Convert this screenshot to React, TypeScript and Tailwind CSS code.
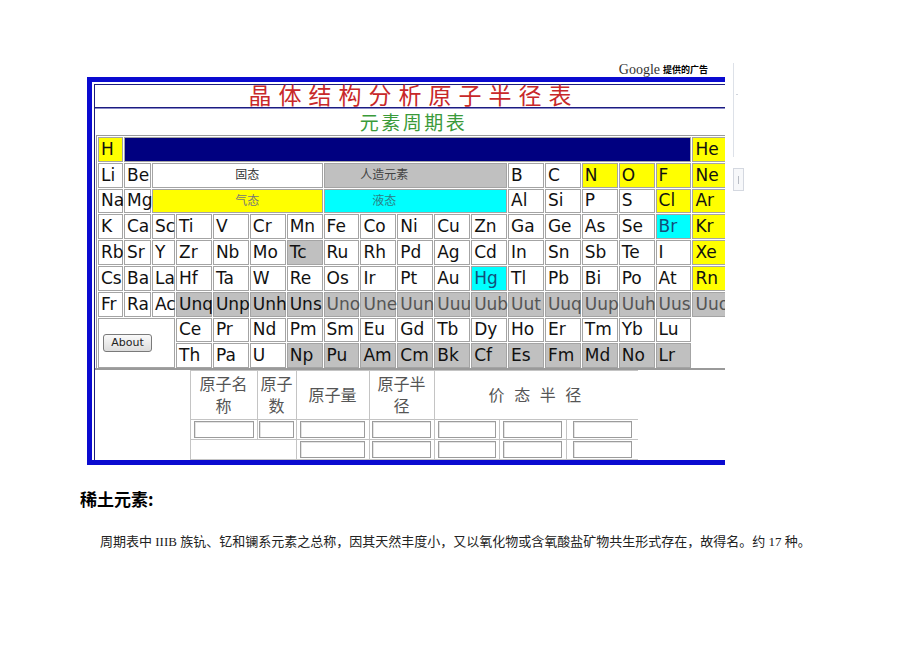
import clsx from 'clsx';

type Bg = 'w' | 'y' | 'c' | 'g' | 'd';

const BG: Record<Bg, string> = {
  w: 'bg-white',
  y: 'bg-[#ffff00]',
  c: 'bg-[#00ffff]',
  g: 'bg-[#c0c0c0]',
  d: 'bg-[#c0c0c0]',
};

const parse = (line: string) =>
  line.split(' ').map((tok) => {
    const [s, b = 'w'] = tok.split(':');
    return { s, b: b as Bg };
  });

const MAIN_ROWS = [
  'K Ca Sc Ti V Cr Mn Fe Co Ni Cu Zn Ga Ge As Se Br:c Kr:y',
  'Rb Sr Y Zr Nb Mo Tc:g Ru Rh Pd Ag Cd In Sn Sb Te I Xe:y',
  'Cs Ba La Hf Ta W Re Os Ir Pt Au Hg:c Tl Pb Bi Po At Rn:y',
  'Fr Ra Ac Unq:g Unp:g Unh:g Uns:g Uno:d Une:d Uun:d Uuu:d Uub:d Uut:d Uuq:d Uup:d Uuh:d Uus:d Uuo:d',
].map(parse);

const LANTH = parse('Ce Pr Nd Pm Sm Eu Gd Tb Dy Ho Er Tm Yb Lu');
const ACTIN = parse('Th Pa U Np:g Pu:g Am:g Cm:g Bk:g Cf:g Es:g Fm:g Md:g No:g Lr:g');

function El({ s, b = 'w' }: { s: string; b?: Bg }) {
  return (
    <div
      className={clsx(
        'flex items-center whitespace-nowrap border border-[#a4a4a4] pl-[2px] text-[17px] leading-none',
        BG[b],
        b === 'd' ? 'text-[#555]' : s === 'Br' || s === 'Hg' ? 'text-[#124f7a]' : 'text-[#111]',
      )}
    >
      {s}
    </div>
  );
}

function Label({ text, className }: { text: string; className: string }) {
  return (
    <div
      className={clsx(
        'col-span-5 flex items-center justify-center border border-[#a4a4a4] text-[12px] leading-none',
        className,
      )}
    >
      {text}
    </div>
  );
}

function Box({ w }: { w: string }) {
  return (
    <input
      readOnly
      className={clsx(
        'h-[17px] border border-[#9c9c9c] bg-white shadow-[inset_1px_1px_0_#e4e4e4] outline-none',
        w,
      )}
    />
  );
}

function PeriodicGrid() {
  return (
    <div className="ml-px border-l border-t border-[#9a9a9a] pl-px pt-px">
      <div className="grid grid-cols-[25px_27px_23px_repeat(15,35.9px)] auto-rows-[24.8px] gap-px font-['DejaVu_Sans','Noto_Sans_CJK_SC',sans-serif]">
        <El s="H" b="y" />
        <div className="col-span-16 border border-[#a4a4a4] bg-[#000080]" />
        <El s="He" b="y" />

        <El s="Li" />
        <El s="Be" />
        <Label text="固态" className="bg-white pl-[20px] text-[#333]" />
        <Label text="人造元素" className="bg-[#c0c0c0] pr-[62px] text-[#444]" />
        <El s="B" />
        <El s="C" />
        <El s="N" b="y" />
        <El s="O" b="y" />
        <El s="F" b="y" />
        <El s="Ne" b="y" />

        <El s="Na" />
        <El s="Mg" />
        <Label text="气态" className="bg-[#ffff00] pl-[20px] text-[#777]" />
        <Label text="液态" className="bg-[#00ffff] pr-[62px] text-[#2a7f86]" />
        <El s="Al" />
        <El s="Si" />
        <El s="P" />
        <El s="S" />
        <El s="Cl" b="y" />
        <El s="Ar" b="y" />

        {MAIN_ROWS.flat().map((e, i) => (
          <El key={i} s={e.s} b={e.b} />
        ))}

        <div className="col-span-3 row-span-2 flex items-center border border-[#a4a4a4] bg-white pl-[4px]">
          <button className="h-[18px] w-[49px] rounded-[3px] border border-[#7a7a7a] bg-gradient-to-b from-[#fafafa] to-[#dcdcdc] font-['DejaVu_Sans',sans-serif] text-[11px] leading-none text-[#222]">
            About
          </button>
        </div>
        {LANTH.map((e, i) => (
          <El key={i} s={e.s} b={e.b} />
        ))}
        <div />
        {ACTIN.map((e, i) => (
          <El key={i} s={e.s} b={e.b} />
        ))}
        <div />
      </div>
    </div>
  );
}

function RadiusTable() {
  const head = 'flex items-center justify-center bg-white px-[3px] text-center text-[16px] leading-[22px] text-[#555]';
  const cell = 'flex items-center justify-center bg-white';
  return (
    <div className="mx-auto w-[448px] bg-[#c4c4c4] p-px font-['Noto_Sans_CJK_SC',sans-serif]">
      <div className="grid grid-cols-[66px_38px_72px_64px_64px_66px_72px] grid-rows-[48px_19px_19px] gap-px">
        <div className={clsx(head, 'pb-[3px]')}>原子名称</div>
        <div className={clsx(head, 'pb-[3px]')}>原子数</div>
        <div className={clsx(head, 'pb-[3px]')}>原子量</div>
        <div className={clsx(head, 'pb-[3px]')}>原子半径</div>
        <div className={clsx(head, 'col-span-3 pb-[3px] tracking-[3px]')}>价 态 半 径</div>

        <div className={cell}><Box w="w-[60px]" /></div>
        <div className={cell}><Box w="w-[35px]" /></div>
        <div className={cell}><Box w="w-[65px]" /></div>
        <div className={cell}><Box w="w-[59px]" /></div>
        <div className={cell}><Box w="w-[58px]" /></div>
        <div className={cell}><Box w="w-[59px]" /></div>
        <div className={cell}><Box w="w-[59px]" /></div>

        <div className="col-span-2 bg-white" />
        <div className={cell}><Box w="w-[65px]" /></div>
        <div className={cell}><Box w="w-[59px]" /></div>
        <div className={cell}><Box w="w-[58px]" /></div>
        <div className={cell}><Box w="w-[59px]" /></div>
        <div className={cell}><Box w="w-[59px]" /></div>
      </div>
    </div>
  );
}

export default function App() {
  return (
    <div className="h-[651px] w-[920px] overflow-hidden bg-white">
      <div className="flex pt-[62px]">
        <div className="ml-[87px] w-[638px]">
          <div className="flex h-[15px] items-center justify-end gap-[3px] pr-[17px]">
            <span className="font-['Liberation_Serif',serif] text-[14px] leading-none text-[#333]">Google</span>
            <span className="font-['Noto_Sans_CJK_SC',sans-serif] text-[9px] font-bold leading-none text-black">提供的广告</span>
          </div>
          <div className="w-[638px] overflow-hidden">
            <div className="w-[652px] border-[5px] border-[#0b0bd0] pl-[2px] pr-[2px] pt-[2px]">
              <div className="border-l border-t border-[#1c1c80] text-center">
                <div className="h-[23px] border-b border-[#1c1c80] font-['Noto_Sans_CJK_SC',sans-serif] text-[23px] leading-[19px] tracking-[7px] text-[#c8282a]">
                  晶体结构分析原子半径表
                </div>
                <div className="h-[27px] border-t border-[#8a8ac8] font-['Noto_Sans_CJK_SC',sans-serif] text-[19px] leading-[25px] tracking-[2.5px] text-[#3a9a3a]">
                  元素周期表
                </div>
                <PeriodicGrid />
                <div className="border-t-2 border-[#9a9a9a]">
                  <RadiusTable />
                </div>
              </div>
            </div>
          </div>
        </div>
        <div className="ml-[8px] flex flex-col">
          <div className="relative mt-px h-[94px] w-px bg-[#dde1e8]">
            <div className="absolute left-[3px] top-[31px] h-px w-[2px] bg-[#d0d4dc]" />
          </div>
          <div className="mt-[11px] flex h-[23px] w-[11px] items-center justify-center border border-[#d4d8e0] bg-[#f7f8fa]">
            <div className="h-[8px] w-px bg-[#b8bcc4]" />
          </div>
        </div>
      </div>

      <h2 className="ml-[80px] mt-[22px] font-['Noto_Sans_CJK_SC',sans-serif] text-[17px] font-bold leading-[24px] text-black">
        稀土元素:
      </h2>
      <p className="ml-[100px] mt-[21px] font-['Liberation_Serif','Noto_Sans_CJK_SC',serif] text-[13px] leading-[20px] text-[#222]">
        周期表中 IIIB 族钪、钇和镧系元素之总称，因其天然丰度小，又以氧化物或含氧酸盐矿物共生形式存在，故得名。约 17 种。
      </p>
    </div>
  );
}
